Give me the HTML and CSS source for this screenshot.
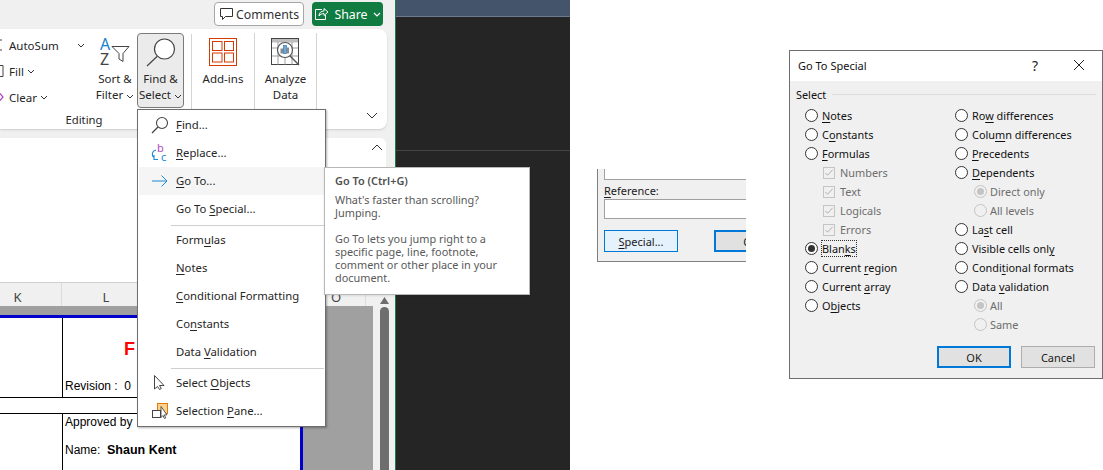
FILE: index.html
```html
<!DOCTYPE html>
<html lang="en">
<head>
    <meta charset="UTF-8">
    <meta name="viewport" content="width=device-width, initial-scale=1.0">
    <title>Go To Special</title>
    <link rel="stylesheet" href="styles.css">
</head>
<body>
    <!-- excel window, cropped on the left -->
    <div class="excel">
        <div class="topbar">
            <button class="comments">
                <svg width="16" height="14" viewBox="0 0 16 14"><path d="M1.500 1.500h12v8h-7l-3 3v-3h-2z" fill="none" stroke="#333" stroke-width="1"/></svg>
                Comments
            </button>
            <button class="share">
                <svg width="15" height="14" viewBox="0 0 15 14"><path d="M8 2.500H1.500v10h10V8M5 9c0-3 2-5 5-5V1.500l4 3.500-4 3.500V6.500C8 6.500 6 7.500 5 9z" fill="none" stroke="#fff" stroke-width="1"/></svg>
                Share
                <svg class="chev" width="8" height="5" viewBox="0 0 8 5"><path d="M1 1l3 3 3-3" fill="none" stroke="#fff" stroke-width="1.200"/></svg>
            </button>
        </div>

        <div class="ribbon">
            <div class="group editing">
                <div class="group-body">
                    <div class="stack">
                        <div class="stack-row">
                            <svg width="6" height="12" viewBox="0 0 6 12"><path d="M0 1h2M0 11h2" stroke="#444" fill="none"/></svg>
                            AutoSum
                            <svg class="autosum-chev" width="8" height="5" viewBox="0 0 8 5"><path d="M1 1l3 3 3-3" fill="none" stroke="#333" stroke-width="1"/></svg>
                        </div>
                        <div class="stack-row">
                            <svg width="6" height="12" viewBox="0 0 6 12"><path d="M0 .5h3v11H0" stroke="#444" fill="none"/></svg>
                            Fill
                            <svg width="8" height="5" viewBox="0 0 8 5"><path d="M1 1l3 3 3-3" fill="none" stroke="#333" stroke-width="1"/></svg>
                        </div>
                        <div class="stack-row">
                            <svg width="6" height="12" viewBox="0 0 6 12"><path d="M0 2.500L3 6 0 9.500" stroke="#b146c2" fill="none" stroke-width="1.200"/></svg>
                            Clear
                            <svg width="8" height="5" viewBox="0 0 8 5"><path d="M1 1l3 3 3-3" fill="none" stroke="#333" stroke-width="1"/></svg>
                        </div>
                    </div>
                    <div class="big-btn sort-btn">
                        <svg width="30" height="28" viewBox="0 0 30 28">
                            <text x="0" y="12" class="sort-a">A</text>
                            <text x="0" y="27" class="sort-z">Z</text>
                            <path d="M12 8.500h17l-6 7v8l-4-2.500v-5.500z" fill="#fff" stroke="#444" stroke-width="1"/>
                        </svg>
                        <span>Sort &amp;</span>
                        <span>Filter <svg width="8" height="5" viewBox="0 0 8 5"><path d="M1 1l3 3 3-3" fill="none" stroke="#333" stroke-width="1"/></svg></span>
                    </div>
                    <div class="big-btn find-btn">
                        <svg width="30" height="32" viewBox="0 0 30 32">
                            <circle cx="18.500" cy="12" r="10" fill="#fff" stroke="#444" stroke-width="1.200"/>
                            <path d="M11 19.500L1 29" stroke="#444" stroke-width="1.200" fill="none"/>
                        </svg>
                        <span>Find &amp;</span>
                        <span>Select <svg width="8" height="5" viewBox="0 0 8 5"><path d="M1 1l3 3 3-3" fill="none" stroke="#333" stroke-width="1"/></svg></span>
                    </div>
                </div>
                <div class="group-label">Editing</div>
            </div>
            <div class="group addins">
                <svg width="28" height="28" viewBox="0 0 28 28" fill="none" stroke="#d83b01" stroke-width="1">
                    <rect x=".5" y=".5" width="27" height="27"/>
                    <rect x="3.500" y="3.500" width="9.500" height="9"/><rect x="15.500" y="3.500" width="9" height="9"/>
                    <rect x="3.500" y="15" width="9.500" height="9"/><rect x="15.500" y="15" width="9" height="9"/>
                </svg>
                <span class="big-label">Add-ins</span>
            </div>
            <div class="group analyze">
                <svg width="29" height="29" viewBox="0 0 29 29">
                    <rect x=".5" y=".5" width="27" height="26" fill="#fff" stroke="#444"/>
                    <rect x="1" y="1" width="26" height="3.500" fill="#bdbdbd"/>
                    <path d="M1 10h26M1 18h26M7 4v23M14 4v23M21 4v23" stroke="#888" stroke-width=".8"/>
                    <circle cx="14" cy="12" r="7.500" fill="#fff" stroke="#555" stroke-width="1.200"/>
                    <rect x="9.500" y="10.500" width="3" height="5" fill="#8a8a8a"/>
                    <rect x="12.500" y="7.500" width="3" height="8" fill="#6aa8dc" stroke="#1a6fb5" stroke-width=".6"/>
                    <rect x="15.500" y="9.500" width="2.500" height="6" fill="#8a8a8a"/>
                    <path d="M19 18l9 9" stroke="#555" stroke-width="1.400"/>
                </svg>
                <span class="big-label">Analyze</span>
                <span class="big-label">Data</span>
            </div>
            <svg class="collapse" width="12" height="7" viewBox="0 0 12 7"><path d="M1 1l5 5 5-5" fill="none" stroke="#333" stroke-width="1"/></svg>
        </div>

        <div class="formula-card">
            <svg width="12" height="7" viewBox="0 0 12 7"><path d="M1 6l5-5 5 5" fill="none" stroke="#333" stroke-width="1"/></svg>
        </div>

        <div class="col-heads">
            <span class="col-k">K</span>
            <span class="col-l">L</span>
            <span class="col-o">O</span>
            <svg class="up-arrow" width="9" height="7" viewBox="0 0 9 7"><path d="M0 7l4.500-7L9 7z" fill="#6e6e6e"/></svg>
        </div>

        <div class="work">
            <div class="sheet">
                <div class="sheet-row top-row">
                    <div class="left-cell"></div>
                    <div class="main-cell">
                        <div class="red-title">F</div>
                        <div class="revision">Revision :&nbsp; 0</div>
                    </div>
                </div>
                <div class="sheet-gap"></div>
                <div class="sheet-row bottom-row">
                    <div class="left-cell"></div>
                    <div class="main-cell">
                        <div class="approved">Approved by</div>
                        <div class="name">Name:&nbsp; <b>Shaun Kent</b></div>
                    </div>
                </div>
            </div>
            <div class="sheet-margin"></div>
            <div class="scroll-track"><div class="scroll-thumb"></div></div>
        </div>

        <!-- find & select dropdown -->
        <div class="menu">
            <div class="menu-item">
                <svg width="18" height="18" viewBox="0 0 18 18"><circle cx="11" cy="7" r="5.500" fill="none" stroke="#444" stroke-width="1.100"/><path d="M7 11l-6 6" stroke="#444" stroke-width="1.200"/></svg>
                <span><u>F</u>ind...</span>
            </div>
            <div class="menu-item">
                <svg width="18" height="18" viewBox="0 0 18 18">
                    <text x="6" y="8" class="rep-b">b</text>
                    <text x="10" y="17" class="rep-c">c</text>
                    <path d="M5 6C1 7 0 11 3 13.500M7 15.500H2.500M3 11v4.500" fill="none" stroke="#1a8ad4" stroke-width="1.100"/>
                </svg>
                <span><u>R</u>eplace...</span>
            </div>
            <div class="menu-item hover">
                <svg width="18" height="18" viewBox="0 0 18 18"><path d="M1 9h15M10.500 3.500L16 9l-5.500 5.500" fill="none" stroke="#1a8ad4" stroke-width="1"/></svg>
                <span><u>G</u>o To...</span>
            </div>
            <div class="menu-item"><i class="no-icon"></i><span>Go To <u>S</u>pecial...</span></div>
            <div class="menu-sep"></div>
            <div class="menu-item"><i class="no-icon"></i><span>Form<u>u</u>las</span></div>
            <div class="menu-item"><i class="no-icon"></i><span><u>N</u>otes</span></div>
            <div class="menu-item"><i class="no-icon"></i><span><u>C</u>onditional Formatting</span></div>
            <div class="menu-item"><i class="no-icon"></i><span>Co<u>n</u>stants</span></div>
            <div class="menu-item"><i class="no-icon"></i><span>Data <u>V</u>alidation</span></div>
            <div class="menu-sep"></div>
            <div class="menu-item">
                <svg width="18" height="18" viewBox="0 0 18 18"><path d="M3.500 1.500v13.500l3-2.500 2 3 1.800-1-1.800-3h4.500z" fill="#fff" stroke="#444" stroke-width="1"/></svg>
                <span>Select <u>O</u>bjects</span>
            </div>
            <div class="menu-item">
                <svg width="18" height="18" viewBox="0 0 18 18">
                    <rect x="6.500" y="1.500" width="10" height="10" fill="#fbd38d" stroke="#e8750c"/>
                    <rect x="1.500" y="8.500" width="8" height="7" fill="#fff" stroke="#444"/>
                    <path d="M10 4.500v11l2-2 1.500 3 1.200-.6-1.400-3H16z" fill="#fff" stroke="#444" stroke-width=".9"/>
                </svg>
                <span>Selection <u>P</u>ane...</span>
            </div>
        </div>

        <div class="tooltip">
            <div class="tip-title">Go To (Ctrl+G)</div>
            <p>What's faster than scrolling?<br>Jumping.</p>
            <p>Go To lets you jump right to a<br>specific page, line, footnote,<br>comment or other place in your<br>document.</p>
        </div>
    </div>

    <div class="dark-panel">
        <div class="dark-head"></div>
        <div class="dark-line"></div>
    </div>

    <!-- go to dialog, cropped -->
    <div class="goto-crop">
        <div class="goto-list"></div>
        <div class="goto-label"><u>R</u>eference:</div>
        <div class="goto-input"></div>
        <div class="goto-buttons">
            <div class="dlg-btn special"><span><u>S</u>pecial...</span></div>
            <div class="dlg-btn primary goto-ok"><span>OK</span></div>
        </div>
    </div>

    <!-- go to special dialog -->
    <div class="dialog">
        <div class="dialog-title">
            <span class="dialog-name">Go To Special</span>
            <span class="dialog-help">?</span>
            <svg width="12" height="12" viewBox="0 0 12 12"><path d="M1 1l10 10M11 1L1 11" stroke="#222" stroke-width="1" fill="none"/></svg>
        </div>
        <div class="dialog-body">
            <div class="select-head"><span>Select</span><i></i></div>
            <div class="options">
                <div class="col">
                    <label class="opt"><i class="radio"></i><span><u>N</u>otes</span></label>
                    <label class="opt"><i class="radio"></i><span>C<u>o</u>nstants</span></label>
                    <label class="opt"><i class="radio"></i><span><u>F</u>ormulas</span></label>
                    <label class="opt sub off"><i class="check"><svg width="11" height="11" viewBox="0 0 11 11"><path d="M1.500 6l2.500 2.500 5.500-6" fill="none" stroke="#a8a8a8" stroke-width="1"/></svg></i><span>Numbers</span></label>
                    <label class="opt sub off"><i class="check"><svg width="11" height="11" viewBox="0 0 11 11"><path d="M1.500 6l2.500 2.500 5.500-6" fill="none" stroke="#a8a8a8" stroke-width="1"/></svg></i><span>Text</span></label>
                    <label class="opt sub off"><i class="check"><svg width="11" height="11" viewBox="0 0 11 11"><path d="M1.500 6l2.500 2.500 5.500-6" fill="none" stroke="#a8a8a8" stroke-width="1"/></svg></i><span>Logicals</span></label>
                    <label class="opt sub off"><i class="check"><svg width="11" height="11" viewBox="0 0 11 11"><path d="M1.500 6l2.500 2.500 5.500-6" fill="none" stroke="#a8a8a8" stroke-width="1"/></svg></i><span>Errors</span></label>
                    <label class="opt"><i class="radio on"></i><span class="focus">Blan<u>k</u>s</span></label>
                    <label class="opt"><i class="radio"></i><span>Current <u>r</u>egion</span></label>
                    <label class="opt"><i class="radio"></i><span>Current <u>a</u>rray</span></label>
                    <label class="opt"><i class="radio"></i><span>O<u>b</u>jects</span></label>
                </div>
                <div class="col">
                    <label class="opt"><i class="radio"></i><span>Ro<u>w</u> differences</span></label>
                    <label class="opt"><i class="radio"></i><span>Colu<u>m</u>n differences</span></label>
                    <label class="opt"><i class="radio"></i><span><u>P</u>recedents</span></label>
                    <label class="opt"><i class="radio"></i><span><u>D</u>ependents</span></label>
                    <label class="opt sub2 off"><i class="radio dis on"></i><span>Direct only</span></label>
                    <label class="opt sub2 off"><i class="radio dis"></i><span>All levels</span></label>
                    <label class="opt"><i class="radio"></i><span>La<u>s</u>t cell</span></label>
                    <label class="opt"><i class="radio"></i><span>Visible cells onl<u>y</u></span></label>
                    <label class="opt"><i class="radio"></i><span>Condi<u>t</u>ional formats</span></label>
                    <label class="opt"><i class="radio"></i><span>Data <u>v</u>alidation</span></label>
                    <label class="opt sub2 off"><i class="radio dis on"></i><span>All</span></label>
                    <label class="opt sub2 off"><i class="radio dis"></i><span>Same</span></label>
                </div>
            </div>
            <div class="dialog-actions">
                <div class="dlg-btn primary"><span>OK</span></div>
                <div class="dlg-btn"><span>Cancel</span></div>
            </div>
        </div>
    </div>
</body>
</html>
```

FILE: styles.css
```css
* {
    box-sizing: border-box;
}
html, body {
    margin: 0;
    padding: 0;
}
body {
    position: relative;
    width: 1103px;
    height: 470px;
    overflow: hidden;
    background: #fff;
    font-family: "Noto Sans", "Open Sans", sans-serif;
    font-size: 11.300px;
    color: #262626;
}
u {
    text-underline-offset: 2px;
}

/* excel window */
.excel {
    position: absolute;
    left: 0;
    top: 0;
    width: 396px;
    height: 470px;
    background: #f0f0f0;
    border-right: 1px solid #1d7a4b;
    display: flex;
    flex-direction: column;
}
.topbar {
    height: 29px;
    flex: none;
    display: flex;
    justify-content: flex-end;
    align-items: flex-start;
    gap: 8px;
    padding: 2px 12px 0 0;
}
.topbar button {
    height: 24px;
    font-family: inherit;
    font-size: 12.300px;
    display: flex;
    align-items: center;
    justify-content: center;
    gap: 5px;
    border-radius: 4px;
    padding: 0;
}
.topbar .comments {
    width: 90px;
    background: #fff;
    border: 1px solid #a6a6a6;
    color: #333;
    justify-content: flex-start;
    padding-left: 4px;
    gap: 1px;
}
.share {
    width: 71px;
    background: #107c41;
    border: none;
    color: #fff;
}

.ribbon {
    position: relative;
    height: 100px;
    flex: none;
    width: 387px;
    background: #fff;
    border-radius: 0 8px 8px 0;
    box-shadow: 0 1px 2px rgba(0, 0, 0, 0.15);
    display: flex;
    align-items: stretch;
    padding: 4px 0 0;
}
.group {
    border-right: 1px solid #d4d4d4;
    height: 76px;
    display: flex;
    flex-direction: column;
    align-items: center;
}
.editing {
    width: 192px;
    display: block;
    height: 96px;
    border-right: none;
    position: relative;
}
.editing::after {
    content: "";
    position: absolute;
    right: 0;
    top: 1px;
    height: 75px;
    width: 1px;
    background: #d4d4d4;
}
.group-body {
    display: flex;
    height: 76px;
}
.group-label {
    text-align: center;
    margin-top: 3px;
    padding-right: 24px;
    line-height: 16px;
    font-size: 11.300px;
}
.stack {
    width: 93px;
    margin-top: -1px;
}
.stack-row {
    height: 26px;
    display: flex;
    align-items: center;
    gap: 3px;
    font-size: 11.500px;
}
.autosum-chev {
    margin-left: 15px;
}
.big-btn {
    display: flex;
    flex-direction: column;
    align-items: center;
    font-size: 11.500px;
    line-height: 16px;
}
.sort-btn {
    width: 44px;
    padding-top: 5px;
}
.sort-btn > svg {
    margin-bottom: 5px;
}
.sort-a {
    font-size: 16px;
    fill: #1a7fcf;
}
.sort-z {
    font-size: 16px;
    fill: #444;
}
.find-btn {
    width: 47px;
    height: 75px;
    background: #ebebeb;
    border: 1px solid #7a7a7a;
    border-radius: 4px;
    padding-top: 3px;
}
.find-btn > svg {
    margin-bottom: 2px;
}
.addins {
    width: 63px;
    padding-top: 5px;
}
.addins svg {
    margin-bottom: 5px;
}
.analyze {
    width: 62px;
    padding-top: 5px;
}
.analyze svg {
    margin-bottom: 4px;
}
.big-label {
    font-size: 11.500px;
    line-height: 16px;
}
.collapse {
    position: absolute;
    right: 9px;
    bottom: 10px;
}

.formula-card {
    margin-top: 9px;
    width: 386px;
    height: 145px;
    flex: none;
    background: #fff;
    border-radius: 0 6px 0 0;
    border-bottom: 1px solid #d0d0d0;
    display: flex;
    justify-content: flex-end;
    padding: 6px 3px 0 0;
}

.col-heads {
    position: relative;
    height: 23px;
    flex: none;
    display: flex;
    color: #444;
    font-size: 13px;
    line-height: 29px;
}
.col-k {
    width: 62px;
    padding-right: 26px;
    text-align: center;
    border-right: 1px solid #dcdcdc;
}
.col-l {
    width: 88px;
    text-align: center;
}
.col-o {
    margin-left: 176px;
    width: 40px;
    padding-left: 5px;
    border-right: 1px solid #dcdcdc;
    height: 23px;
}
.up-arrow {
    position: absolute;
    left: 380px;
    top: 14px;
}

.work {
    flex: 1;
    min-height: 0;
    display: flex;
    background: #f0f0f0;
    overflow: hidden;
}
.sheet {
    width: 303px;
    display: flex;
    flex-direction: column;
    padding-top: 9px;
    background: #a0a0a0;
    font-family: "Liberation Sans", Arial, sans-serif;
    color: #000;
}
.sheet-row {
    display: flex;
    background: #fff;
    border-right: 3px solid #0000cd;
}
.top-row {
    height: 83px;
    flex: none;
    border-top: 3px solid #0000cd;
    border-bottom: 1px solid #000;
}
.sheet-gap {
    height: 15px;
    flex: none;
    background: #fff;
    border-right: 3px solid #0000cd;
}
.bottom-row {
    flex: 1;
    min-height: 0;
    border-top: 1px solid #000;
}
.left-cell {
    width: 63px;
    flex: none;
    border-right: 1px solid #000;
}
.main-cell {
    padding-left: 2px;
    font-size: 12px;
    flex: 1;
}
.red-title {
    color: #f00;
    font-weight: bold;
    font-size: 18px;
    line-height: 20px;
    padding: 21px 0 0 59px;
}
.revision {
    margin-top: 20px;
    line-height: 14px;
}
.approved {
    line-height: 14px;
    margin-top: 1px;
}
.name {
    line-height: 14px;
    margin-top: 14px;
}
.name b {
    font-size: 12.500px;
}
.sheet-margin {
    width: 70px;
    background: #a0a0a0;
}
.scroll-track {
    flex: 1;
    padding-left: 7px;
}
.scroll-thumb {
    width: 9px;
    height: 163px;
    margin-top: 1px;
    background: #6e6e6e;
    border-radius: 5px 5px 0 0;
}

/* dropdown menu */
.menu {
    position: absolute;
    left: 137px;
    top: 109px;
    width: 189px;
    height: 318px;
    background: #fff;
    border: 1px solid #6e6e6e;
    box-shadow: 1px 1px 2px rgba(0, 0, 0, 0.3);
    padding: 1px 1px 0;
    z-index: 2;
}
.menu-item {
    height: 28px;
    display: flex;
    align-items: center;
    padding-left: 12px;
    gap: 7px;
    color: #262626;
}
.menu-item span {
    position: relative;
    top: -1px;
}
.menu-item.hover {
    background: #f5f5f5;
}
.no-icon {
    width: 18px;
    flex: none;
}
.menu-item svg {
    flex: none;
}
.menu-sep {
    height: 3px;
    margin-left: 32px;
    border-bottom: 1px solid #cfcfcf;
    padding-top: 1px;
}
.rep-b {
    font-size: 11px;
    fill: #b146c2;
}
.rep-c {
    font-size: 11px;
    fill: #1a8ad4;
}

.tooltip {
    position: absolute;
    left: 324px;
    top: 167px;
    width: 206px;
    height: 128px;
    background: #fff;
    border: 1px solid #b8b8b8;
    box-shadow: 0 1px 2px rgba(0, 0, 0, 0.1);
    padding: 6px 10px;
    font-size: 10.900px;
    line-height: 13px;
    color: #595959;
    z-index: 3;
}
.tip-title {
    font-weight: 600;
    color: #505050;
    margin-bottom: 6px;
}
.tooltip p {
    margin: 0 0 13px;
}

/* dark area next to excel */
.dark-panel {
    position: absolute;
    left: 396px;
    top: 0;
    width: 174px;
    height: 470px;
    background: #252525;
}
.dark-head {
    height: 17px;
    background: #44546a;
    border-bottom: 1px solid #6c7a8c;
}
.dark-line {
    margin-top: 133px;
    height: 1px;
    background: #444;
}

/* cropped go to dialog */
.goto-crop {
    position: absolute;
    left: 597px;
    top: 169px;
    width: 149px;
    height: 93px;
    background: #f0f0f0;
    border-left: 1px solid #808080;
    border-bottom: 1px solid #808080;
    padding-left: 6px;
    overflow: hidden;
}
.goto-list {
    width: 160px;
    height: 11px;
    background: #fff;
    border: 1px solid #a0a0a0;
    border-top: none;
}
.goto-label {
    margin-top: 3px;
    line-height: 16px;
    font-size: 11px;
    color: #1a1a1a;
}
.goto-input {
    width: 160px;
    height: 20px;
    background: #fff;
    border: 1px solid #a0a0a0;
}
.goto-buttons {
    display: flex;
    gap: 36px;
    width: 200px;
    margin-top: 11px;
}
.dlg-btn {
    width: 74px;
    height: 22px;
    flex: none;
    background: #e1e1e1;
    border: 1px solid #adadad;
    display: flex;
    align-items: center;
    justify-content: center;
    font-size: 11px;
    color: #1a1a1a;
}
.dlg-btn.special {
    background: #e5f1fb;
    border-color: #0078d7;
}
.dlg-btn.primary {
    border: 2px solid #0078d7;
}

/* go to special */
.dialog {
    position: absolute;
    left: 789px;
    top: 50px;
    width: 314px;
    height: 329px;
    background: #f0f0f0;
    border: 1px solid #6e6e6e;
    display: flex;
    flex-direction: column;
}
.dialog-title {
    height: 30px;
    flex: none;
    background: #fff;
    display: flex;
    align-items: center;
    padding: 0 17px 2px 8px;
}
.dialog-name {
    flex: 1;
    font-size: 11px;
    color: #111;
}
.dialog-help {
    margin-right: 35px;
    font-size: 14px;
    color: #222;
}
.dialog-body {
    flex: 1;
    padding: 5px 6px 0;
    display: flex;
    flex-direction: column;
    font-size: 10.900px;
    color: #111;
}
.select-head {
    display: flex;
    align-items: center;
    gap: 6px;
    height: 16px;
}
.select-head i {
    flex: 1;
    height: 1px;
    background: #dcdcdc;
}
.options {
    display: grid;
    grid-template-columns: 150px 150px;
    margin-top: 4px;
    padding-left: 9px;
    height: 232px;
}
.opt {
    display: flex;
    align-items: center;
    height: 19px;
    gap: 4px;
}
.opt.off {
    color: #6d6d6d;
}
.opt.sub {
    padding-left: 18px;
    gap: 5px;
}
.opt.sub2 {
    padding-left: 19px;
    gap: 3px;
}
.radio {
    width: 13px;
    height: 13px;
    flex: none;
    border: 1px solid #333;
    border-radius: 50%;
    background: #fff;
    display: flex;
    align-items: center;
    justify-content: center;
}
.radio.on::after {
    content: "";
    width: 7px;
    height: 7px;
    border-radius: 50%;
    background: #333;
}
.radio.dis {
    border-color: #c4c4c4;
    background: #f0f0f0;
}
.radio.dis.on::after {
    background: #c4c4c4;
}
.check {
    width: 12px;
    height: 12px;
    flex: none;
    border: 1px solid #c4c4c4;
    display: flex;
    align-items: center;
    justify-content: center;
}
.focus {
    outline: 1px dotted #333;
    outline-offset: 0;
}
.dialog-actions {
    display: flex;
    gap: 10px;
    padding-left: 141px;
    margin-top: 8px;
}
```
